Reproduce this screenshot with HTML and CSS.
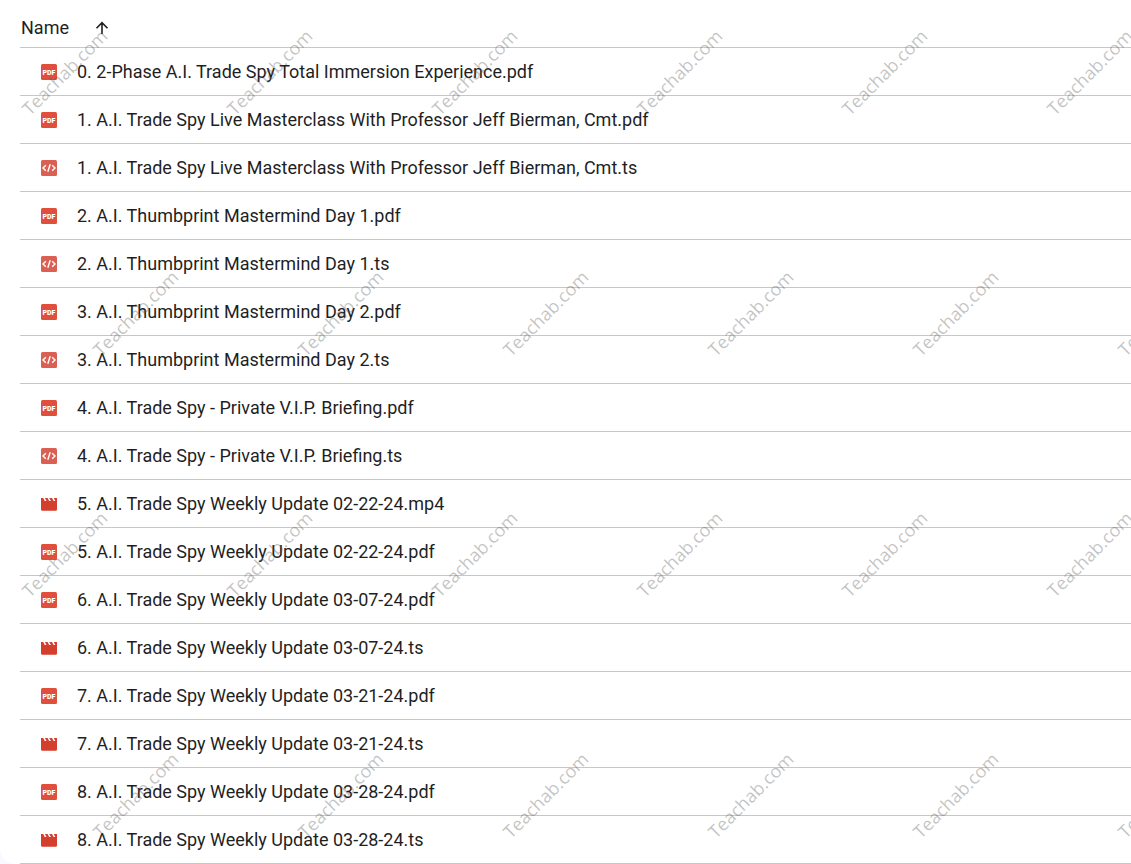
FILE: index.html
```
<!DOCTYPE html>
<html lang="en">
<head>
    <meta charset="UTF-8">
    <meta name="viewport" content="width=device-width, initial-scale=1.0">
    <title>Files</title>
    <link rel="stylesheet" href="styles.css">
</head>
<body>
    <!-- Icon shapes used by the file rows -->
    <svg class="sprite" aria-hidden="true">
        <symbol id="icon-pdf" viewBox="0 0 16 16">
            <rect width="16" height="16" rx="1.5" fill="#e04f3e"/>
            <text class="icon-text" x="8" y="10.500" text-anchor="middle">PDF</text>
        </symbol>
        <symbol id="icon-code" viewBox="0 0 16 16">
            <rect width="16" height="16" rx="1.5" fill="#db6054"/>
            <path d="M4.8 5.2 2 8l2.8 2.800M11.200 5.200 14 8l-2.800 2.800M9.200 4.200l-2.400 7.600" fill="none" stroke="#fff" stroke-width="1.4"/>
        </symbol>
        <symbol id="icon-video" viewBox="0 0 16 16">
            <path d="M0 2h2.200l1.600 3h1.700L3.900 2h2.700l1.600 3h1.700L8.300 2H11l1.600 3h1.700l-1.600-3H16v11.500a1.200 1.200 0 0 1-1.200 1.200H1.200A1.200 1.200 0 0 1 0 13.500z" fill="#d23f2e"/>
        </symbol>
    </svg>

    <main class="panel">
        <table class="files">
            <thead>
                <tr>
                    <th scope="col" aria-sort="ascending">
                        <button type="button" class="sort">
                            Name
                            <svg class="arrow" viewBox="0 0 14 14" aria-hidden="true"><path d="M7 13V2M1.500 7.200 7 1.700l5.500 5.500" fill="none" stroke="#1f1f1f" stroke-width="1.6"/></svg>
                        </button>
                    </th>
                </tr>
            </thead>
            <tbody>
                <tr><td><a href="#"><svg class="icon" aria-hidden="true"><use href="#icon-pdf"/></svg>0. 2-Phase A.I. Trade Spy Total Immersion Experience.pdf</a></td></tr>
                <tr><td><a href="#"><svg class="icon" aria-hidden="true"><use href="#icon-pdf"/></svg>1. A.I. Trade Spy Live Masterclass With Professor Jeff Bierman, Cmt.pdf</a></td></tr>
                <tr><td><a href="#"><svg class="icon" aria-hidden="true"><use href="#icon-code"/></svg>1. A.I. Trade Spy Live Masterclass With Professor Jeff Bierman, Cmt.ts</a></td></tr>
                <tr><td><a href="#"><svg class="icon" aria-hidden="true"><use href="#icon-pdf"/></svg>2. A.I. Thumbprint Mastermind Day 1.pdf</a></td></tr>
                <tr><td><a href="#"><svg class="icon" aria-hidden="true"><use href="#icon-code"/></svg>2. A.I. Thumbprint Mastermind Day 1.ts</a></td></tr>
                <tr><td><a href="#"><svg class="icon" aria-hidden="true"><use href="#icon-pdf"/></svg>3. A.I. Thumbprint Mastermind Day 2.pdf</a></td></tr>
                <tr><td><a href="#"><svg class="icon" aria-hidden="true"><use href="#icon-code"/></svg>3. A.I. Thumbprint Mastermind Day 2.ts</a></td></tr>
                <tr><td><a href="#"><svg class="icon" aria-hidden="true"><use href="#icon-pdf"/></svg>4. A.I. Trade Spy - Private V.I.P. Briefing.pdf</a></td></tr>
                <tr><td><a href="#"><svg class="icon" aria-hidden="true"><use href="#icon-code"/></svg>4. A.I. Trade Spy - Private V.I.P. Briefing.ts</a></td></tr>
                <tr><td><a href="#"><svg class="icon" aria-hidden="true"><use href="#icon-video"/></svg>5. A.I. Trade Spy Weekly Update 02-22-24.mp4</a></td></tr>
                <tr><td><a href="#"><svg class="icon" aria-hidden="true"><use href="#icon-pdf"/></svg>5. A.I. Trade Spy Weekly Update 02-22-24.pdf</a></td></tr>
                <tr><td><a href="#"><svg class="icon" aria-hidden="true"><use href="#icon-pdf"/></svg>6. A.I. Trade Spy Weekly Update 03-07-24.pdf</a></td></tr>
                <tr><td><a href="#"><svg class="icon" aria-hidden="true"><use href="#icon-video"/></svg>6. A.I. Trade Spy Weekly Update 03-07-24.ts</a></td></tr>
                <tr><td><a href="#"><svg class="icon" aria-hidden="true"><use href="#icon-pdf"/></svg>7. A.I. Trade Spy Weekly Update 03-21-24.pdf</a></td></tr>
                <tr><td><a href="#"><svg class="icon" aria-hidden="true"><use href="#icon-video"/></svg>7. A.I. Trade Spy Weekly Update 03-21-24.ts</a></td></tr>
                <tr><td><a href="#"><svg class="icon" aria-hidden="true"><use href="#icon-pdf"/></svg>8. A.I. Trade Spy Weekly Update 03-28-24.pdf</a></td></tr>
                <tr><td><a href="#"><svg class="icon" aria-hidden="true"><use href="#icon-video"/></svg>8. A.I. Trade Spy Weekly Update 03-28-24.ts</a></td></tr>
            </tbody>
        </table>
    </main>

    <!-- Watermark over the list -->
    <div class="watermark" aria-hidden="true">
        <div class="marks"><span>Teachab.com</span><span>Teachab.com</span><span>Teachab.com</span><span>Teachab.com</span><span>Teachab.com</span><span>Teachab.com</span></div>
        <div class="marks"><span>Teachab.com</span><span>Teachab.com</span><span>Teachab.com</span><span>Teachab.com</span><span>Teachab.com</span><span>Teachab.com</span></div>
        <div class="marks"><span>Teachab.com</span><span>Teachab.com</span><span>Teachab.com</span><span>Teachab.com</span><span>Teachab.com</span><span>Teachab.com</span></div>
        <div class="marks"><span>Teachab.com</span><span>Teachab.com</span><span>Teachab.com</span><span>Teachab.com</span><span>Teachab.com</span><span>Teachab.com</span></div>
    </div>
</body>
</html>
```
FILE: styles.css
```
* {
    box-sizing: border-box;
}
body {
    position: relative;
    margin: 0;
    background-color: #f8fafd;
    color: #1f1f1f;
    font-family: Roboto, "Liberation Sans", sans-serif;
    font-size: 18px;
    line-height: 24px;
}
.sprite {
    position: absolute;
    width: 0;
    height: 0;
}
.panel {
    padding-left: 20px;
    background-color: #fff;
    border-bottom-left-radius: 16px;
}
.files {
    width: 100%;
    border-collapse: separate;
    border-spacing: 0;
}
th, td {
    height: 48px;
    padding: 0;
    border-bottom: 1px solid #c7c7c7;
    text-align: left;
    font-weight: normal;
}
th {
    padding-top: 8px;
}
.sort {
    display: flex;
    align-items: center;
    gap: 26px;
    padding: 0 1px;
    border: none;
    background: none;
    color: inherit;
    font: inherit;
    cursor: pointer;
}
.arrow {
    width: 14px;
    height: 14px;
}
td a {
    display: flex;
    align-items: center;
    gap: 20px;
    padding-left: 21px;
    color: inherit;
    text-decoration: none;
}
td a:hover {
    text-decoration: underline;
}
.icon {
    flex: none;
    width: 16px;
    height: 16px;
}
.icon-text {
    fill: #fff;
    font-family: Roboto, sans-serif;
    font-size: 7px;
    font-weight: 900;
}
.watermark {
    position: absolute;
    top: 0;
    right: 0;
    bottom: 0;
    left: 0;
    overflow: hidden;
    pointer-events: none;
    color: rgba(80, 80, 80, 0.34);
    font-family: "Open Sans", sans-serif;
    font-size: 18px;
    font-weight: 500;
}
.marks {
    display: flex;
    align-items: center;
    height: 241px;
    margin-left: -38px;
}
.marks:first-child {
    margin-top: -49px;
}
.marks:nth-child(even) {
    margin-left: 33px;
}
.marks span {
    flex: 0 0 205px;
    text-align: center;
    transform: rotate(-45deg);
}
```
